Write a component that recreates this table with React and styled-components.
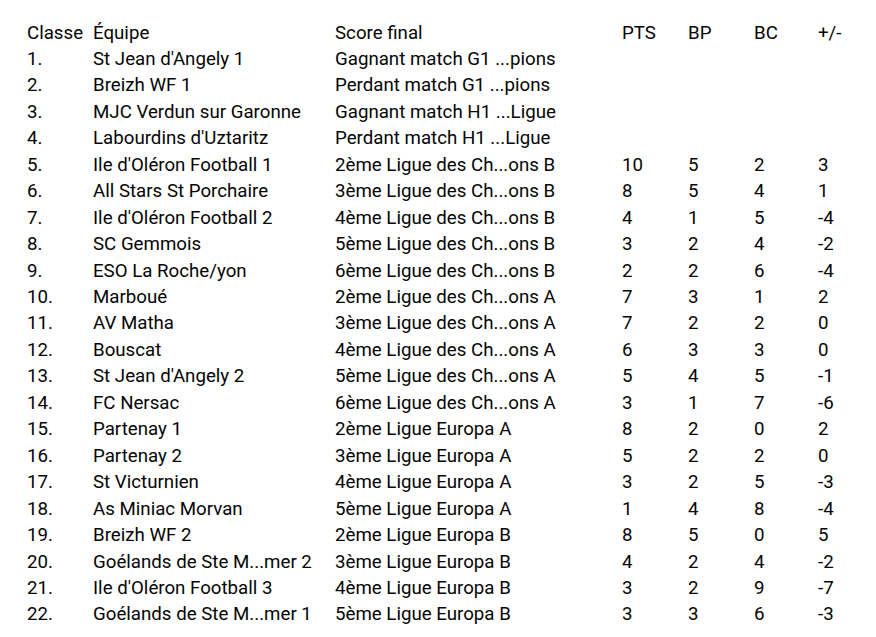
import React from "react";
import styled, { createGlobalStyle } from "styled-components";

const GlobalStyle = createGlobalStyle`
  body {
    margin: 0;
    background: #fff;
    font-family: Roboto, "Noto Sans", sans-serif;
    color: #050505;
  }
`;

const Wrapper = styled.section`
  padding: 19.5px 0 0 27px;
`;

const Table = styled.table`
  border-collapse: collapse;
  table-layout: fixed;
  font-size: 18.7px;
  line-height: 26.46px;
`;

const Cell = styled.td`
  padding: 0;
  white-space: nowrap;
  text-align: left;
  font-weight: 400;
  width: ${({ w }) => w}px;
`;

const HeadCell = styled(Cell).attrs({ as: "th" })``;

const widths = [66, 242, 287, 66, 66, 64, 40];

const rows = [
  ["St Jean d'Angely 1", "Gagnant match G1 ...pions", "", "", "", ""],
  ["Breizh WF 1", "Perdant match G1 ...pions", "", "", "", ""],
  ["MJC Verdun sur Garonne", "Gagnant match H1 ...Ligue", "", "", "", ""],
  ["Labourdins d'Uztaritz", "Perdant match H1 ...Ligue", "", "", "", ""],
  ["Ile d'Oléron Football 1", "2ème Ligue des Ch...ons B", "10", "5", "2", "3"],
  ["All Stars St Porchaire", "3ème Ligue des Ch...ons B", "8", "5", "4", "1"],
  ["Ile d'Oléron Football 2", "4ème Ligue des Ch...ons B", "4", "1", "5", "-4"],
  ["SC Gemmois", "5ème Ligue des Ch...ons B", "3", "2", "4", "-2"],
  ["ESO La Roche/yon", "6ème Ligue des Ch...ons B", "2", "2", "6", "-4"],
  ["Marboué", "2ème Ligue des Ch...ons A", "7", "3", "1", "2"],
  ["AV Matha", "3ème Ligue des Ch...ons A", "7", "2", "2", "0"],
  ["Bouscat", "4ème Ligue des Ch...ons A", "6", "3", "3", "0"],
  ["St Jean d'Angely 2", "5ème Ligue des Ch...ons A", "5", "4", "5", "-1"],
  ["FC Nersac", "6ème Ligue des Ch...ons A", "3", "1", "7", "-6"],
  ["Partenay 1", "2ème Ligue Europa A", "8", "2", "0", "2"],
  ["Partenay 2", "3ème Ligue Europa A", "5", "2", "2", "0"],
  ["St Victurnien", "4ème Ligue Europa A", "3", "2", "5", "-3"],
  ["As Miniac Morvan", "5ème Ligue Europa A", "1", "4", "8", "-4"],
  ["Breizh WF 2", "2ème Ligue Europa B", "8", "5", "0", "5"],
  ["Goélands de Ste M...mer 2", "3ème Ligue Europa B", "4", "2", "4", "-2"],
  ["Ile d'Oléron Football 3", "4ème Ligue Europa B", "3", "2", "9", "-7"],
  ["Goélands de Ste M...mer 1", "5ème Ligue Europa B", "3", "3", "6", "-3"],
];

const headers = ["Classe", "Équipe", "Score final", "PTS", "BP", "BC", "+/-"];

export default function App() {
  return (
    <>
      <GlobalStyle />
      <Wrapper>
        <Table>
          <thead>
            <tr>
              {headers.map((h, i) => (
                <HeadCell key={h} w={widths[i]}>
                  {h}
                </HeadCell>
              ))}
            </tr>
          </thead>
          <tbody>
            {rows.map((r, i) => (
              <tr key={i}>
                <Cell w={widths[0]}>{i + 1}.</Cell>
                {r.map((c, j) => (
                  <Cell key={j} w={widths[j + 1]}>
                    {c}
                  </Cell>
                ))}
              </tr>
            ))}
          </tbody>
        </Table>
      </Wrapper>
    </>
  );
}
